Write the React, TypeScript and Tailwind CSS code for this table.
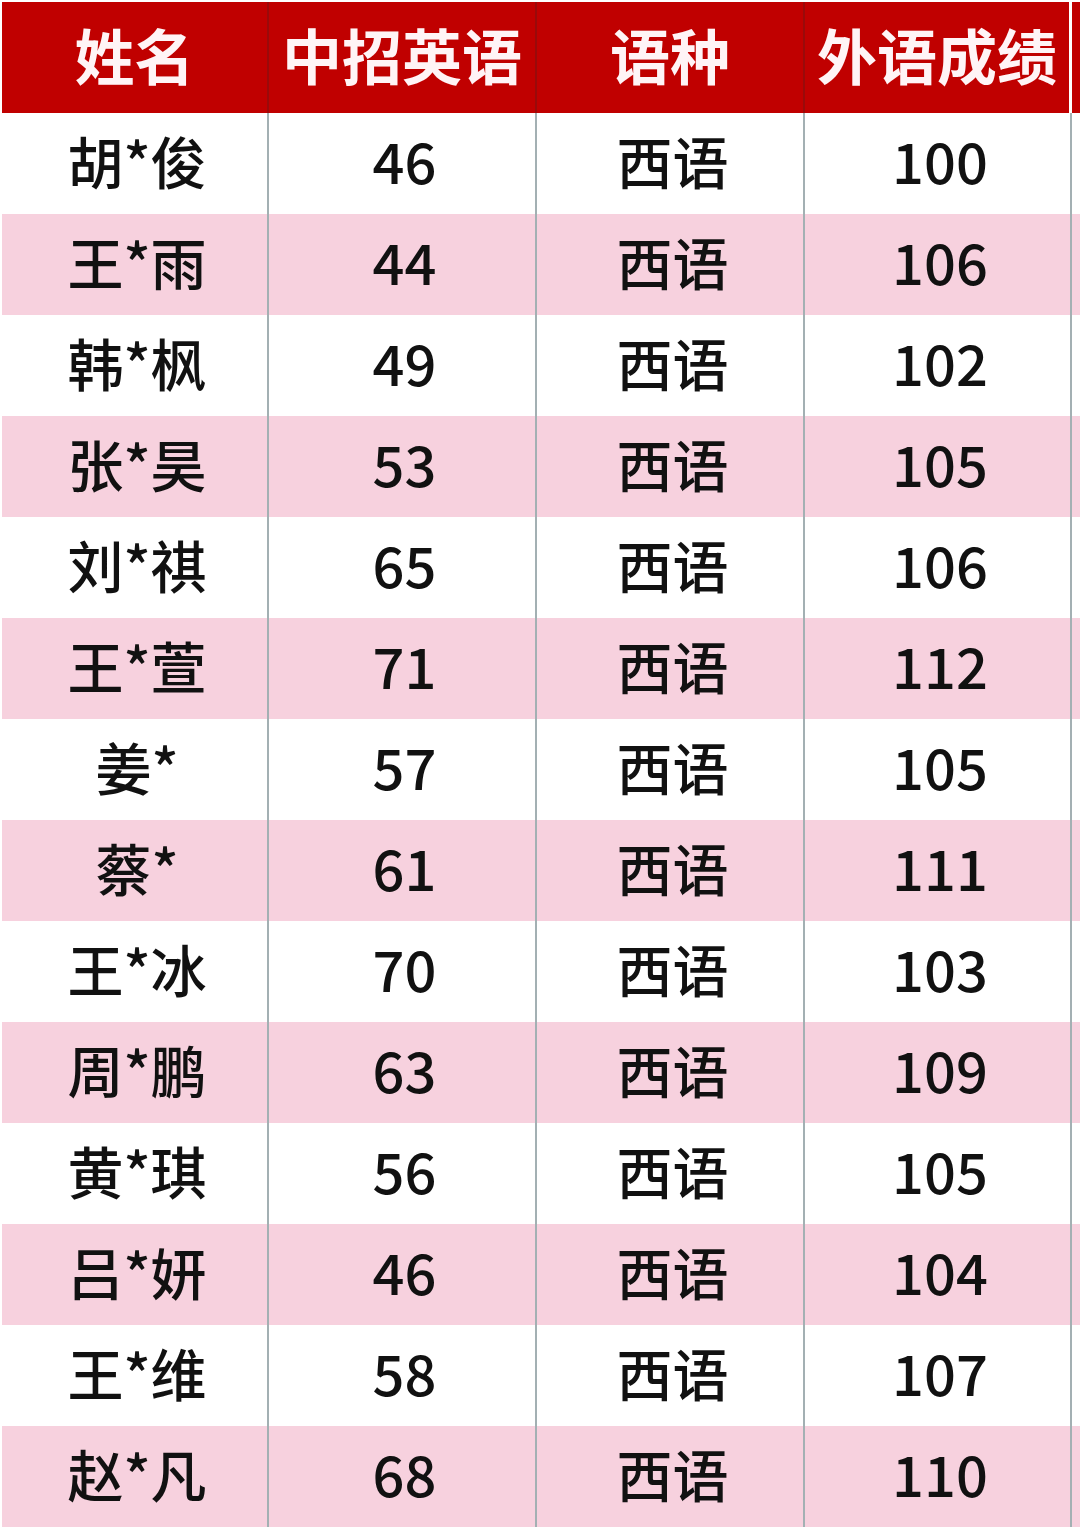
const rows = [
  ["胡*俊", "46", "西语", "100"],
  ["王*雨", "44", "西语", "106"],
  ["韩*枫", "49", "西语", "102"],
  ["张*昊", "53", "西语", "105"],
  ["刘*祺", "65", "西语", "106"],
  ["王*萱", "71", "西语", "112"],
  ["姜*", "57", "西语", "105"],
  ["蔡*", "61", "西语", "111"],
  ["王*冰", "70", "西语", "103"],
  ["周*鹏", "63", "西语", "109"],
  ["黄*琪", "56", "西语", "105"],
  ["吕*妍", "46", "西语", "104"],
  ["王*维", "58", "西语", "107"],
  ["赵*凡", "68", "西语", "110"],
];

const headers = ["姓名", "中招英语", "语种", "外语成绩"];
const widths = ["w-[267px]", "w-[268px]", "w-[268px]", "w-[267px]"];

export default function App() {
  return (
    <div
      className="w-[1080px] h-[1532px] bg-white overflow-hidden pt-[2px] pl-[2px]"
      style={{ fontFamily: '"Noto Sans CJK SC", "Noto Sans", sans-serif' }}
    >
      {/* header */}
      <div className="flex h-[111px]">
        {headers.map((h, i) => (
          <div
            key={h}
            className={`${widths[i]} bg-[#c00000] flex items-center justify-center text-[#fff4f6] text-[60px] font-bold leading-none pb-[8px] ${
              i < 3 ? "border-r-2 border-[#9a0a0a]" : "border-r-[3px] border-white"
            }`}
          >
            {h}
          </div>
        ))}
        <div className="flex-1 bg-[#c00000]" />
      </div>

      {/* body */}
      {rows.map((r, idx) => {
        const bg = idx % 2 === 1 ? "bg-[#f7d1de]" : "bg-white";
        return (
          <div key={idx} className={`flex h-[101px] ${bg}`}>
            {r.map((c, i) => (
              <div
                key={i}
                className={`${widths[i]} flex items-center justify-center text-[56px] font-medium text-[#111] leading-none pb-[8px] pl-[5px] border-r-2 border-[#a3b0b3]`}
              >
                {c}
              </div>
            ))}
            <div className="flex-1" />
          </div>
        );
      })}
    </div>
  );
}
